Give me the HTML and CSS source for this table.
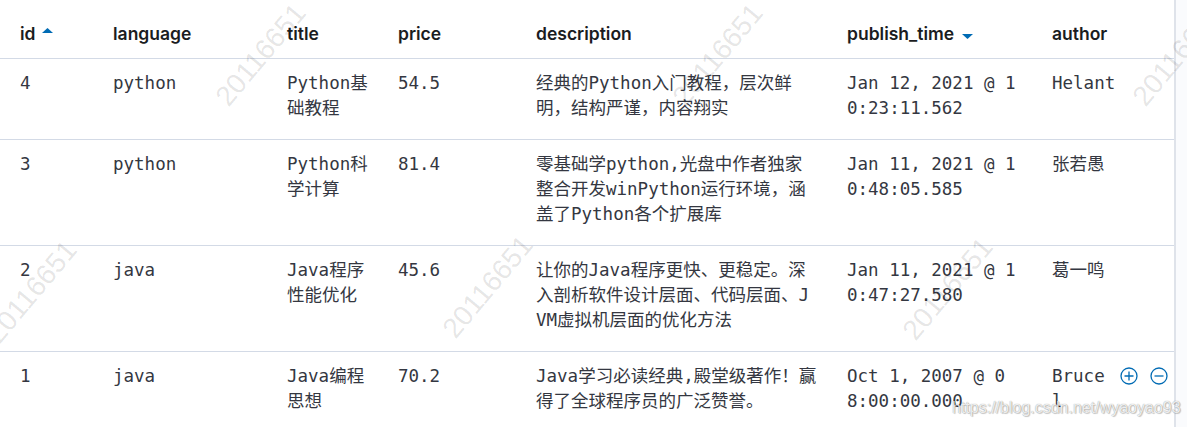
FILE: index.html
```html
<!DOCTYPE html>
<html lang="zh">
<head>
<meta charset="utf-8">
<title>books</title>
<link rel="stylesheet" href="styles.css">
</head>
<body>
<div class="page">
  <div class="table">
    <div class="row head">
      <div class="hcell">id<svg class="sort" width="11" height="5" viewBox="0 0 11 5"><path d="M0 5 L5.5 0 L11 5 Z"/></svg></div>
      <div class="hcell">language</div>
      <div class="hcell">title</div>
      <div class="hcell">price</div>
      <div class="hcell">description</div>
      <div class="hcell">publish_time<svg class="sort down" width="11" height="5" viewBox="0 0 11 5"><path d="M0 0 L11 0 L5.5 5 Z"/></svg></div>
      <div class="hcell">author</div>
      <div class="hcell"></div>
    </div>
    <div class="row">
      <div class="cell">4</div>
      <div class="cell">python</div>
      <div class="cell title">Python基础教程</div>
      <div class="cell">54.5</div>
      <div class="cell desc">经典的Python入门教程，层次鲜明，结构严谨，内容翔实</div>
      <div class="cell time">Jan 12, 2021 @ 10:23:11.562</div>
      <div class="cell author">Helant</div>
      <div class="cell"></div>
    </div>
    <div class="row">
      <div class="cell">3</div>
      <div class="cell">python</div>
      <div class="cell title">Python科学计算</div>
      <div class="cell">81.4</div>
      <div class="cell desc">零基础学python,光盘中作者独家整合开发winPython运行环境，涵盖了Python各个扩展库</div>
      <div class="cell time">Jan 11, 2021 @ 10:48:05.585</div>
      <div class="cell author">张若愚</div>
      <div class="cell"></div>
    </div>
    <div class="row">
      <div class="cell">2</div>
      <div class="cell">java</div>
      <div class="cell title">Java程序性能优化</div>
      <div class="cell">45.6</div>
      <div class="cell desc">让你的Java程序更快、更稳定。深入剖析软件设计层面、代码层面、JVM虚拟机层面的优化方法</div>
      <div class="cell time">Jan 11, 2021 @ 10:47:27.580</div>
      <div class="cell author">葛一鸣</div>
      <div class="cell"></div>
    </div>
    <div class="row">
      <div class="cell">1</div>
      <div class="cell">java</div>
      <div class="cell title">Java编程思想</div>
      <div class="cell">70.2</div>
      <div class="cell desc">Java学习必读经典,殿堂级著作！赢得了全球程序员的广泛赞誉。</div>
      <div class="cell time">Oct 1, 2007 @ 08:00:00.000</div>
      <div class="cell author">Bruce l</div>
      <div class="cell actions">
        <svg class="act" width="18" height="18" viewBox="0 0 18 18"><circle cx="9" cy="9" r="8"/><path d="M9 4.5 V13.5 M4.5 9 H13.5"/></svg>
        <svg class="act" width="18" height="18" viewBox="0 0 18 18"><circle cx="9" cy="9" r="8"/><path d="M4.5 9 H13.5"/></svg>
      </div>
    </div>
  </div>
  <div class="scroll"></div>

  <span class="mark m1">20116651</span>
  <span class="mark m2">20116651</span>
  <span class="mark m3">20116651</span>
  <span class="mark m4">20116651</span>
  <span class="mark m5">20116651</span>
  <span class="mark m6">20116651</span>
  <span class="csdn">https://blog.csdn.net/wyaoyao93</span>
</div>
</body>
</html>
```
FILE: styles.css
```css
html, body {
  margin: 0;
  padding: 0;
  background: #ffffff;
}

.page {
  position: relative;
  display: flex;
  width: 1187px;
  height: 427px;
  overflow: hidden;
}

.table {
  width: 1174px;
  flex: none;
  border-right: 2px solid #dfe3ea;
}

.scroll {
  flex: 1;
  background: #fafbfd;
}

.row {
  display: grid;
  grid-template-columns: 93px 174px 111px 138px 311px 205px 68px 1fr;
  padding: 12px 0 18px 20px;
  border-bottom: 1px solid #d3dae6;
}

.row.head {
  padding: 21px 0 12px 20px;
}

.hcell {
  display: flex;
  align-items: center;
  font-family: Inter, "Noto Sans", sans-serif;
  font-weight: 600;
  font-size: 17.5px;
  line-height: 25px;
  color: #1a1c21;
  white-space: nowrap;
}

.sort {
  fill: #006bb4;
  margin-left: 6px;
  margin-top: -6px;
}

.sort.down {
  margin-left: 8px;
  margin-top: 6px;
}

.cell {
  font-family: "DejaVu Sans Mono", "Noto Sans CJK SC", monospace;
  font-size: 17.5px;
  line-height: 25px;
  color: #343741;
  word-break: break-all;
}

.title { max-width: 91px; }
.desc { max-width: 282px; }
.time { max-width: 172px; }
.author { max-width: 66px; }

.actions {
  display: flex;
  gap: 12px;
  padding-top: 3px;
  align-items: flex-start;
}

.act {
  fill: none;
  stroke: #006bb4;
  stroke-width: 1.3;
}

.mark {
  position: absolute;
  font-family: "Liberation Sans", Arial, sans-serif;
  font-size: 28px;
  line-height: 1;
  color: rgba(0, 0, 0, 0.11);
  transform: translate(-50%, -50%) rotate(-50deg);
  white-space: nowrap;
  pointer-events: none;
}

.m1 { left: 261px; top: 55px; }
.m2 { left: 718px; top: 55px; }
.m3 { left: 1178px; top: 55px; }
.m4 { left: 32px; top: 292px; }
.m5 { left: 488px; top: 287px; }
.m6 { left: 948px; top: 289px; }

.csdn {
  position: absolute;
  left: 952px;
  top: 397px;
  font-family: "Liberation Sans", Arial, sans-serif;
  font-size: 16px;
  line-height: 22px;
  color: rgba(255, 255, 255, 0.85);
  text-shadow: 0 0 1px rgba(0, 0, 0, 0.45), 1px 1px 1px rgba(0, 0, 0, 0.2);
  white-space: nowrap;
}
```
